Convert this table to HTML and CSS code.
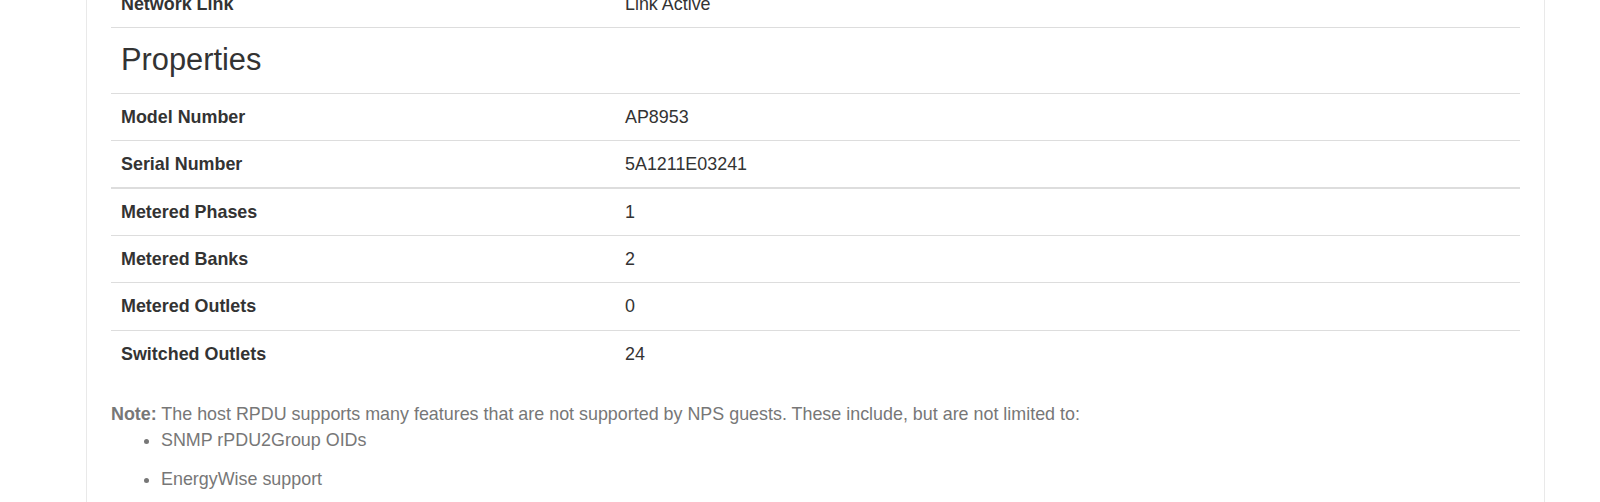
FILE: index.html
```html
<!DOCTYPE html>
<html>
<head>
<meta charset="utf-8">
<link rel="stylesheet" href="styles.css">
</head>
<body>
<div class="panel">
  <table class="props">
    <tbody>
      <tr><th>Network Link</th><td>Link Active</td></tr>
    </tbody>
    <tbody>
      <tr><td colspan="2" class="heading"><h3>Properties</h3></td></tr>
      <tr><th>Model Number</th><td>AP8953</td></tr>
      <tr><th>Serial Number</th><td>5A1211E03241</td></tr>
    </tbody>
    <tbody>
      <tr><th>Metered Phases</th><td>1</td></tr>
      <tr><th>Metered Banks</th><td>2</td></tr>
      <tr><th>Metered Outlets</th><td>0</td></tr>
      <tr><th>Switched Outlets</th><td>24</td></tr>
    </tbody>
  </table>
  <div class="note">
    <p><strong>Note:</strong> The host RPDU supports many features that are not supported by NPS guests. These include, but are not limited to:</p>
    <ul>
      <li>SNMP rPDU2Group OIDs</li>
      <li>EnergyWise support</li>
    </ul>
  </div>
</div>
</body>
</html>
```

FILE: styles.css
```css
html, body {
  margin: 0;
  padding: 0;
  background: #ffffff;
}
body {
  font-family: "Liberation Sans", Arial, sans-serif;
  font-size: 17.9px;
  line-height: 25px;
  color: #333333;
  overflow: hidden;
}
.panel {
  margin: -19px 0 0 86px;
  width: 1409px;
  padding: 0 24px 40px 24px;
  border-left: 1px solid #e9e9e9;
  border-right: 1px solid #e9e9e9;
}
.props {
  width: 100%;
  border-collapse: collapse;
  border-spacing: 0;
  margin-bottom: 25px;
}
.props th,
.props td {
  text-align: left;
  vertical-align: top;
  padding: 11px 10px 10px 10px;
  border-top: 1px solid #dddddd;
  line-height: 25.1px;
}
.props th {
  width: 484px;
  font-weight: bold;
}
.props tbody + tbody {
  border-top: 2px solid #dddddd;
}
.props tbody:nth-of-type(2) {
  border-top: none;
}
.props tbody:first-child tr:first-child th,
.props tbody:first-child tr:first-child td {
  border-top: none;
}
.props td.heading {
  padding: 15px 10px 16px 10px;
  line-height: 34px;
}
.props h3 {
  margin: 0;
  font-size: 30.8px;
  line-height: 34px;
  font-weight: normal;
  color: #333333;
}
.note {
  color: #777777;
}
.note p {
  margin: 0;
}
.note ul {
  margin: 1px 0 0 0;
  padding-left: 50px;
}
.note li {
  margin-bottom: 14px;
}
```
